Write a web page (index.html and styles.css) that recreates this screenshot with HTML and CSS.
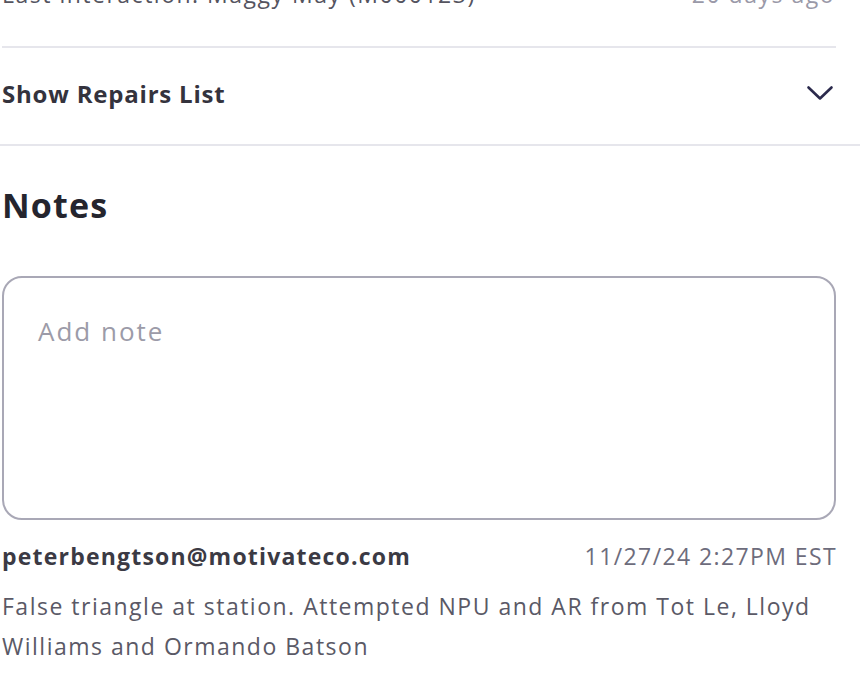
FILE: index.html
```html
<!DOCTYPE html>
<html>
<head>
<meta charset="utf-8">
<link rel="stylesheet" href="styles.css">
</head>
<body>
<div class="page">
  <section class="summary">
    <div class="inner">
      <div class="last-row">
        <span class="last-text">Last interaction: Maggy May (M000123)</span>
        <span class="last-age">20 days ago</span>
      </div>
      <div class="divider"></div>
      <div class="repairs-row">
        <span class="repairs-label">Show Repairs List</span>
        <svg class="chevron" width="28" height="18" viewBox="0 0 28 18"><path d="M2.5 3.5 L14 14.5 L25.5 3.5" fill="none" stroke="#2b2a4c" stroke-width="2.6" stroke-linecap="round" stroke-linejoin="round"/></svg>
      </div>
    </div>
  </section>
  <section class="notes">
    <h2 class="notes-title">Notes</h2>
    <div class="note-input">Add note</div>
    <div class="note-meta">
      <span class="note-author">peterbengtson@motivateco.com</span>
      <span class="note-date">11/27/24 2:27PM EST</span>
    </div>
    <p class="note-body">False triangle at station. Attempted NPU and AR from Tot Le, Lloyd Williams and Ormando Batson</p>
  </section>
</div>
</body>
</html>
```

FILE: styles.css
```css
html, body {
  margin: 0;
  padding: 0;
  background: #ffffff;
}
body {
  font-family: "Open Sans", Lato, sans-serif;
  overflow: hidden;
}
.page {
  width: 860px;
}
.summary {
  border-bottom: 2px solid #e6e6ec;
}
.summary .inner {
  padding: 0 24px 0 2px;
}
.last-row {
  display: flex;
  justify-content: space-between;
  align-items: baseline;
  margin-top: -19px;
  height: 41px;
  font-size: 23px;
  line-height: 26px;
  letter-spacing: 1.5px;
}
.last-text {
  color: #55545f;
}
.last-age {
  color: #9a99a8;
  margin-right: 1px;
}
.divider {
  height: 2px;
  background: #e6e6ec;
  margin-top: 24px;
}
.repairs-row {
  height: 96px;
  display: flex;
  align-items: center;
  justify-content: space-between;
}
.repairs-label {
  font-size: 24px;
  font-weight: 700;
  color: #34333d;
  letter-spacing: 0.8px;
  margin-top: -6px;
}
.chevron {
  margin-right: 2px;
  margin-top: -6px;
}
.notes {
  padding: 0 24px 0 2px;
}
.notes-title {
  margin: 0;
  padding-top: 37px;
  font-size: 34px;
  line-height: 44px;
  font-weight: 700;
  color: #25252e;
  letter-spacing: 1.2px;
}
.note-input {
  margin-top: 49px;
  border: 2px solid #a9a8b6;
  border-radius: 20px;
  box-sizing: border-box;
  height: 244px;
  padding: 38px 0 0 34px;
  font-size: 26px;
  line-height: 30px;
  letter-spacing: 2px;
  color: #9c9ba8;
}
.note-meta {
  display: flex;
  justify-content: space-between;
  align-items: baseline;
  margin-top: 20px;
  font-size: 23px;
  line-height: 32px;
}
.note-author {
  font-weight: 700;
  color: #3b3a44;
  letter-spacing: 1.2px;
}
.note-date {
  color: #6d6c7c;
  letter-spacing: 1.4px;
  margin-right: -1px;
}
.note-body {
  margin: 14px 0 0;
  font-size: 23px;
  line-height: 40px;
  color: #5a5966;
  letter-spacing: 1.5px;
}
```
